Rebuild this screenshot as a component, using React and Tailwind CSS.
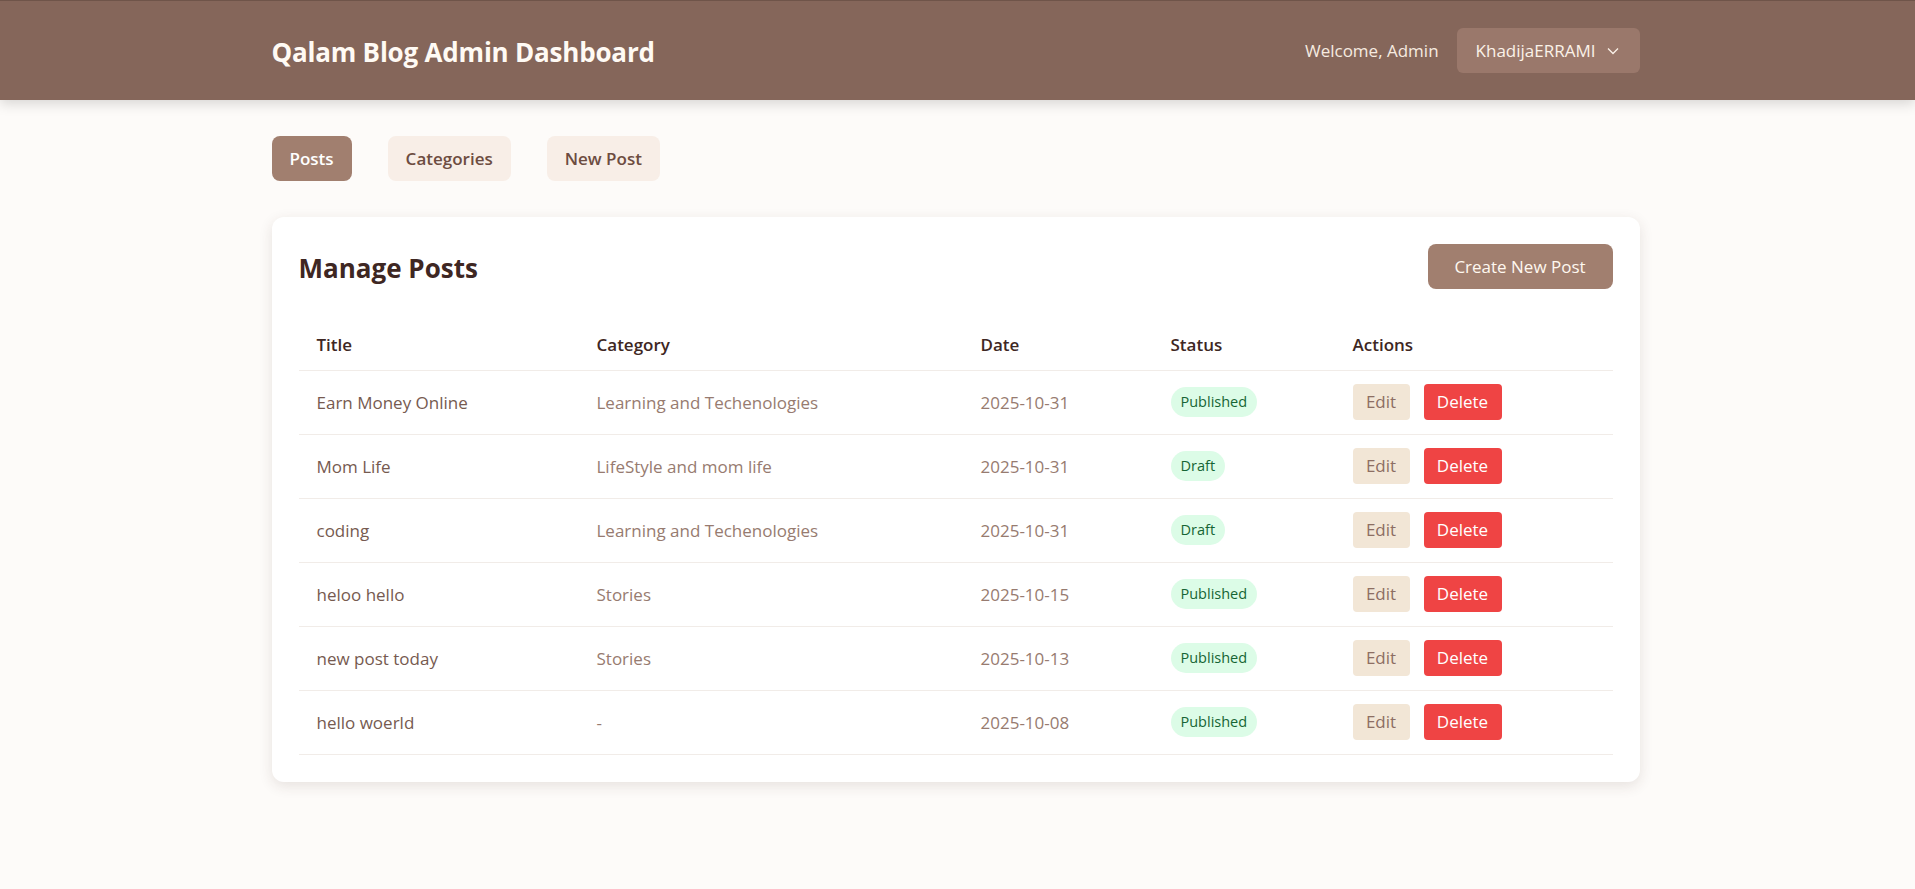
import { useState } from "react";

const posts = [
    { id: 1, title: "Earn Money Online", category: "Learning and Techenologies", date: "2025-10-31", status: "Published" },
    { id: 2, title: "Mom Life", category: "LifeStyle and mom life", date: "2025-10-31", status: "Draft" },
    { id: 3, title: "coding", category: "Learning and Techenologies", date: "2025-10-31", status: "Draft" },
    { id: 4, title: "heloo hello", category: "Stories", date: "2025-10-15", status: "Published" },
    { id: 5, title: "new post today", category: "Stories", date: "2025-10-13", status: "Published" },
    { id: 6, title: "hello woerld", category: "-", date: "2025-10-08", status: "Published" },
];

const tabs = ["Posts", "Categories", "New Post"];

export default function App() {
    const [tab, setTab] = useState("Posts");

    return (
        <div className="min-h-screen bg-[#fdfbf9] font-['Segoe_UI','Open_Sans',sans-serif] text-[#3e2723]">
            <header className="bg-[#85665a] border-t border-[#6f5449] shadow-[0_4px_12px_rgba(0,0,0,0.15)]">
                <div className="max-w-[1404px] mx-auto pl-4 pr-5 h-[99px] flex items-center justify-between">
                    <h1 className="pt-[3px] text-[26px] font-bold text-[#fffaf4] tracking-[-0.2px]">Qalam Blog Admin Dashboard</h1>
                    <div className="flex items-center gap-[18px]">
                        <span className="text-[17px] text-[#f6ebe0]">Welcome, Admin</span>
                        <button className="h-[45px] pl-[19px] pr-[21px] rounded-md bg-[#9a786b] text-[#fbf2e8] text-[17px] flex items-center gap-[11px]">
                            KhadijaERRAMI
                            <svg width="12" height="8" viewBox="0 0 12 8" fill="none" stroke="currentColor" strokeWidth="1.3">
                                <path d="M1 1.5l5 5 5-5" />
                            </svg>
                        </button>
                    </div>
                </div>
            </header>

            <main className="max-w-[1404px] mx-auto pl-4 pr-5">
                <nav className="flex gap-[36px] mt-[36px]">
                    {tabs.map((t) => (
                        <button
                            key={t}
                            onClick={() => setTab(t)}
                            className={
                                t === tab
                                    ? "h-[45px] px-[18px] rounded-lg bg-[#a17f6f] text-white text-[17px] font-semibold"
                                    : "h-[45px] px-[18px] rounded-lg bg-[#f8eee7] text-[#6d4c41] text-[17px] font-semibold"
                            }
                        >
                            {t}
                        </button>
                    ))}
                </nav>

                <section className="mt-[36px] bg-white rounded-xl shadow-[0_4px_14px_rgba(62,39,35,0.12)] p-[27px]">
                    <div className="flex items-center justify-between">
                        <h2 className="pt-[3px] text-[26px] font-bold text-[#3e2723]">Manage Posts</h2>
                        <button className="h-[45px] w-[185px] rounded-lg bg-[#a17f6f] text-[#fff8f0] text-[17px]">
                            Create New Post
                        </button>
                    </div>

                    <table className="w-full mt-[31px] border-collapse">
                        <thead>
                            <tr className="border-b border-[#f1ece8] h-[50px] text-left text-[17px] text-[#3e2723]">
                                <th className="w-[280px] px-[18px] font-semibold">Title</th>
                                <th className="w-[384px] px-[18px] font-semibold">Category</th>
                                <th className="w-[190px] px-[18px] font-semibold">Date</th>
                                <th className="w-[182px] px-[18px] font-semibold">Status</th>
                                <th className="px-[18px] font-semibold">Actions</th>
                            </tr>
                        </thead>
                        <tbody>
                            {posts.map((post) => (
                                <tr key={post.id} className="border-b border-[#f1ece8] h-[64px] text-[17px]">
                                    <td className="px-[18px] pt-[2px] text-[#765a50]">{post.title}</td>
                                    <td className="px-[18px] pt-[2px] text-[#977b70]">{post.category}</td>
                                    <td className="px-[18px] pt-[2px] text-[#977b70]">{post.date}</td>
                                    <td className="px-[18px]">
                                        <span className="inline-flex items-center h-[30px] px-[10px] rounded-full bg-[#dcfce7] text-[#166534] text-[14.5px]">
                                            {post.status}
                                        </span>
                                    </td>
                                    <td className="px-[18px]">
                                        <div className="flex gap-[14px]">
                                            <button className="h-[36px] w-[57px] rounded bg-[#f2e6d6] text-[#8d6e63] text-[17px]">Edit</button>
                                            <button className="h-[36px] w-[78px] rounded bg-[#ef4444] text-white text-[17px]">Delete</button>
                                        </div>
                                    </td>
                                </tr>
                            ))}
                        </tbody>
                    </table>
                </section>
            </main>
        </div>
    );
}
